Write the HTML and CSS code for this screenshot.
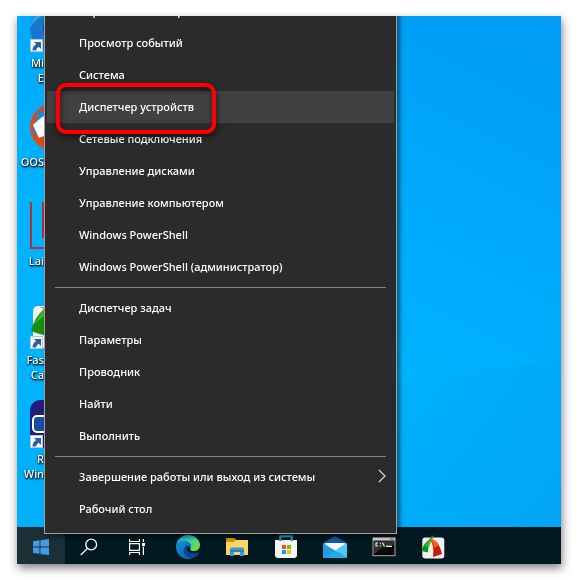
FILE: index.html
```html
<!DOCTYPE html>
<html lang="ru">
<head>
<meta charset="utf-8">
<title>Windows</title>
<link rel="stylesheet" href="styles.css">
</head>
<body>
<main class="desktop">
  <svg class="wallpaper" viewBox="0 0 544 511" preserveAspectRatio="none" aria-hidden="true">
    <defs>
      <linearGradient id="sky" gradientUnits="userSpaceOnUse" x1="390" y1="370" x2="560" y2="30"><stop offset="0" stop-color="#00b3ff"/><stop offset=".5" stop-color="#00a8fb"/><stop offset="1" stop-color="#009cf5"/></linearGradient>
      <linearGradient id="floor" gradientUnits="userSpaceOnUse" x1="390" y1="400" x2="544" y2="511"><stop offset="0" stop-color="#00b0fb"/><stop offset="1" stop-color="#00a5f3"/></linearGradient>
    </defs>
    <rect width="544" height="511" fill="url(#sky)"/>
    <path d="M0 420 L380 368 Q460 354 544 344 V511 H0Z" fill="url(#floor)"/>
  </svg>

  <ul class="shortcuts">
    <li class="shortcut">
      <svg class="picture" viewBox="0 0 48 48"><circle cx="24" cy="24" r="24" fill="#1677cf"/><path d="M0 24C2 6 18-3 34 4L44 12C24 4 8 10 0 24Z" fill="#28a5e0"/><path d="M14 30C10 17 20 12 30 18V46C21 45 16 39 14 30Z" fill="#0c3d8f"/><use href="#link-arrow"/></svg>
      <span class="label">Mi<br>E</span>
    </li>
    <li class="shortcut">
      <svg class="picture" viewBox="0 0 48 48"><circle cx="24" cy="24" r="24" fill="#dd4a17"/><path d="M5 19 8 7 24 11V37L15 31 4 32 3 22Z" fill="#2a83d0"/><path d="M3 22 12 14 24 10V29L9 35Z" fill="#fff"/></svg>
      <span class="label">OOS</span>
    </li>
    <li class="shortcut">
      <svg class="picture" viewBox="0 0 48 48"><path d="M1 0V46H48M13 0V36M47 0V46" fill="none" stroke="#b52d38" stroke-width="2"/></svg>
      <span class="label">Lai</span>
    </li>
    <li class="shortcut">
      <svg class="picture" viewBox="0 0 48 48"><rect x="3" y="5" width="44" height="42" rx="5" fill="#f5f5f5"/><path d="M10 6 20 11 24 7Z" fill="#ee6336"/><path d="M1 30Q4 17 14 8L22 14V36Q10 34 1 30Z" fill="#16900c"/><path d="M4 23 14 8 18 12Z" fill="#35b828"/><use href="#link-arrow"/></svg>
      <span class="label">Fas<br>Ca</span>
    </li>
    <li class="shortcut">
      <svg class="picture" viewBox="0 0 48 48"><rect width="48" height="48" rx="10" fill="#221d7d"/><rect x="3" y="16" width="42" height="16" rx="4" fill="#164fa2" stroke="#fff" stroke-width="2"/><use href="#link-arrow"/></svg>
      <span class="label">R<br>Win</span>
    </li>
  </ul>

  <nav class="taskbar" aria-label="Панель задач">
    <button class="task start" aria-label="Пуск"><svg width="16" height="16" viewBox="0 0 16 16"><path d="M0 2.2 6.5 1.3V7.6H0ZM7.4 1.2 16 0V7.6H7.4ZM0 8.5H6.5V14.8L0 13.9ZM7.4 8.5H16V16L7.4 14.9Z" fill="#429ce3"/></svg></button>
    <button class="task" aria-label="Поиск"><svg width="18" height="18" viewBox="0 0 18 18" fill="none" stroke="#fff" stroke-width="1.3"><circle cx="11.2" cy="6.5" r="5.4"/><path d="M7.4 10.4 .8 17"/></svg></button>
    <button class="task" aria-label="Представление задач"><svg width="16" height="16" viewBox="0 0 16 16" fill="none" stroke="#fff" stroke-width="1.2"><path d="M.6 0V2.5H10.4V0M.6 16V13.5H10.4V16M.6 4.6H10.4V11.4H.6ZM14.4 0V3M14.4 7.5V16"/><path d="M13 4H16V7H13Z" fill="#fff" stroke="none"/></svg></button>
    <div class="pinned">
      <button class="task" aria-label="Edge"><svg width="24" height="24" viewBox="0 0 24 24">
        <defs><linearGradient id="wave" x1="0" y1="0" x2="1" y2=".5"><stop stop-color="#149edc"/><stop offset=".5" stop-color="#30c5ca"/><stop offset="1" stop-color="#65df4e"/></linearGradient><linearGradient id="body" x1="0" y1="0" x2=".6" y2="1"><stop stop-color="#168fd6"/><stop offset="1" stop-color="#0968bd"/></linearGradient></defs>
        <path d="M0 11C1 4 6 0 12 0 19 0 24 5 24 10 24 14 21 16 18 16 15 16 13.5 15 14.5 13.5 17 9 11 5 6 6.5 3 7.4 1 9 0 11Z" fill="url(#wave)"/>
        <path d="M0 12C0 8 4 5.5 8 6 13 6.5 16 10 14.8 13 12 10 7 13 8 17 9 21 14 23 16 23.2 8 26 0 20 0 12Z" fill="url(#body)"/>
        <path d="M9.2 11.5C5 17 11 25 17 23 20 22 22 20 23 18 23.2 17.4 22.8 17 22 17.4 17 20 11 17 11 14.2 11 12 12.5 11.2 14.4 12 13.2 9.6 10.7 9.8 9.2 11.5Z" fill="#0b4492"/>
      </svg></button>
      <button class="task" aria-label="Проводник"><svg width="22" height="20" viewBox="0 0 22 20"><path d="M0 1H8L10 3H21.5V18H0Z" fill="#edbd3c"/><path d="M0 1H8L10 3 8 5H0Z" fill="#dc9400"/><path d="M0 5H8L10 3H22V18H0Z" fill="#ffd75e"/><path d="M4 19V12Q4 10.5 5.5 10.5H16.5Q18 10.5 18 12V19H14V15H8V19Z" fill="#3e98de"/><path d="M4 13H18V15H4Z" fill="#2784cb"/></svg></button>
      <button class="task" aria-label="Магазин"><svg width="24" height="24" viewBox="0 0 24 24"><path d="M6.3 6V1.3H17.7V6" fill="none" stroke="#2ba9df" stroke-width="2"/><path d="M1 5H23V20Q23 23 20 23H4Q1 23 1 20Z" fill="#f4f4f4"/><path d="M6.3 6V4.6M17.7 6V4.6" stroke="#1b75b5" stroke-width="2"/><path d="M8 10H12V14H8Z" fill="#f25022"/><path d="M13 10H17V14H13Z" fill="#7fba00"/><path d="M8 15H12V19H8Z" fill="#00a4ef"/><path d="M13 15H17V19H13Z" fill="#ffb900"/></svg></button>
      <button class="task" aria-label="Почта"><svg width="24" height="24" viewBox="0 0 24 24"><path d="M0 8 12 1 24 8V12H0Z" fill="#0c59a6"/><path d="M2 8H22V13L12 18 2 13Z" fill="#f6f6f6"/><path d="M0 8 24 23H0Z" fill="#1d9de6"/><path d="M24 8V23L12 15.5Z" fill="#4bc9fb"/><path d="M0 23 12 15.5 24 23Z" fill="#22a9ee"/></svg></button>
      <button class="task" aria-label="Командная строка"><svg width="24" height="20" viewBox="0 0 24 20"><rect x="1" y=".7" width="22" height="18" fill="#080808" stroke="#a9adad"/><path d="M1 1H23V3.5H1Z" fill="#d8d8d8"/><path d="M18 2H22" stroke="#666"/><path d="M2 4H22V8Q10 9 4 16L2 17Z" fill="#303030"/><path d="M6 6H4V9H6M8.5 6V7M8.5 8.3V9.3M10.5 5.5 12.5 9.5M14 9.4H20" fill="none" stroke="#eee" stroke-width="1.1"/></svg></button>
      <button class="task" aria-label="FastStone"><svg width="24" height="24" viewBox="0 0 24 24"><rect x="1.3" y="2.5" width="22" height="21" rx="3" fill="#f0f0ee"/><path d="M12 1 10 4" stroke="#168b19" stroke-width="2"/><path d="M11 3Q2 8 .5 16L7 17.5Q7 9 11 3Z" fill="#15901c"/><path d="M11 3Q6 6 4 11L8 12 11 3Z" fill="#36b831"/><path d="M8 3.5Q18 5 21 19L12 22Q14 10 8 3.5Z" fill="#cd1909"/><path d="M8 3.5Q15 4 18 10L13 13Q13 8 8 3.5Z" fill="#f16029"/></svg></button>
    </div>
  </nav>

  <div class="menu" role="menu">
    <button class="item" role="menuitem">Управление электропитанием</button>
    <button class="item" role="menuitem">Просмотр событий</button>
    <button class="item" role="menuitem">Система</button>
    <button class="item active" role="menuitem">Диспетчер устройств</button>
    <button class="item" role="menuitem">Сетевые подключения</button>
    <button class="item" role="menuitem">Управление дисками</button>
    <button class="item" role="menuitem">Управление компьютером</button>
    <button class="item" role="menuitem">Windows PowerShell</button>
    <button class="item" role="menuitem">Windows PowerShell (администратор)</button>
    <hr class="divider">
    <button class="item" role="menuitem">Диспетчер задач</button>
    <button class="item" role="menuitem">Параметры</button>
    <button class="item" role="menuitem">Проводник</button>
    <button class="item" role="menuitem">Найти</button>
    <button class="item" role="menuitem">Выполнить</button>
    <hr class="divider">
    <button class="item" role="menuitem">Завершение работы или выход из системы<svg class="chevron" width="8" height="14" viewBox="0 0 8 14"><path d="M.8 .8 7 7 .8 13.2" fill="none" stroke="#c4e8fa" stroke-width="1.2"/></svg></button>
    <button class="item" role="menuitem">Рабочий стол</button>
  </div>
</main>

<svg class="symbols" aria-hidden="true">
  <symbol id="link-arrow" viewBox="0 0 48 48"><rect x=".5" y="35.5" width="12" height="12" fill="#f6f8fa" stroke="#bac6cf"/><path d="M4 38H11V45L8.7 42.7Q6.5 44 6 46.5H2.5Q2.5 42 6.3 40.3Z" fill="#265ea8"/></symbol>
</svg>
</body>
</html>
```
FILE: styles.css
```css
*,
*::after {
  box-sizing: border-box;
}

body {
  display: flex;
  min-height: 100vh;
  margin: 0;
  padding: 16px 16px 16px 17px;
  background: #fff;
  color: #fff;
  font: 500 11px/15px "Noto Sans", "Open Sans", sans-serif;
  filter: drop-shadow(1px 4px 5px rgba(0, 0, 0, 0.5));
}

.desktop {
  position: relative;
  display: flex;
  flex: 1;
  flex-direction: column;
  justify-content: space-between;
  overflow: hidden;
  background: #00aeff;
}

.wallpaper {
  position: absolute;
  inset: 0;
  width: 100%;
  height: calc(100% - 37px);
}

.shortcuts {
  position: relative;
  width: 27px;
  margin: -12px 0 0;
  padding: 0;
  overflow: hidden;
  list-style: none;
}

.shortcut {
  display: flex;
  flex-direction: column;
  gap: 3px;
  height: 99px;
}

.picture {
  flex: none;
  width: 48px;
  height: 48px;
  margin-left: 13px;
}

.label {
  text-align: right;
  text-shadow: 1px 1px 2px #000, 0 1px 2px #000;
}

.taskbar {
  position: relative;
  display: flex;
  flex: none;
  height: 37px;
  overflow: hidden;
  background: #001820;
}

.pinned {
  display: flex;
  gap: 1px;
  margin-left: 3px;
}

.task {
  display: flex;
  flex: none;
  align-items: center;
  justify-content: center;
  width: 48px;
  height: 40px;
  padding: 0;
  border: 0;
  background: none;
}

.start {
  background: #1b2f37;
}

.menu {
  position: absolute;
  bottom: 30px;
  left: 27px;
  width: 353px;
  padding: 0 2px 8px;
  border: 1px solid #a0a0a0;
  background: #2b2b2b;
  box-shadow: 3px 3px 4px rgba(0, 0, 0, 0.45);
}

.item {
  position: relative;
  display: flex;
  align-items: center;
  justify-content: space-between;
  width: 100%;
  height: 32px;
  padding: 0 8px 2px 32px;
  border: 0;
  background: none;
  color: #fff;
  font: inherit;
  white-space: nowrap;
}

.active {
  z-index: 1;
  background: #414141;
}

.active::after {
  content: "";
  position: absolute;
  top: -8px;
  left: 9px;
  width: 160px;
  height: 51px;
  border: 4px solid #f00;
  border-radius: 10px;
  box-shadow: 1px 3px 6px rgba(0, 0, 0, 0.55), inset 1px 3px 6px rgba(0, 0, 0, 0.45);
}

.divider {
  height: 1px;
  margin: 4px 8px;
  border: 0;
  background: #808080;
}

.symbols {
  position: absolute;
  width: 0;
  height: 0;
}
```
